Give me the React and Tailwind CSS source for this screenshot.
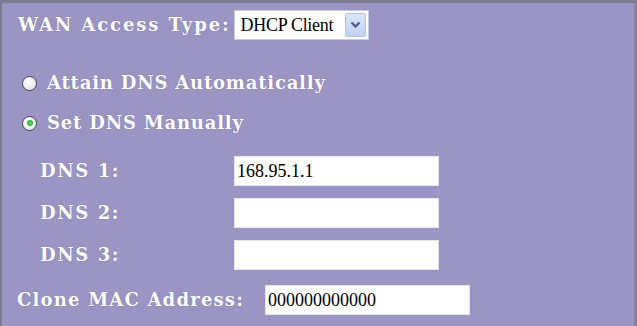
import React from "react";

const label = "text-white font-bold text-[18px] leading-none [font-family:'DejaVu_Serif',serif] [text-shadow:0_0_1px_rgba(80,70,120,0.6)]";
const inputText = "[font-family:'Liberation_Serif',serif] text-[18px] text-black leading-none";

function Radio({ checked }) {
  return (
    <span className="relative inline-flex w-[15px] h-[15px] rounded-full border border-[#3c4a5e] bg-[radial-gradient(circle_at_40%_35%,#ffffff,#dcdce4)] items-center justify-center shrink-0">
      {checked && <span className="w-[6px] h-[6px] rounded-full bg-[radial-gradient(circle,#5ed85a,#1e9a2a)]" />}
    </span>
  );
}

function TextBox({ value, className = "" }) {
  return (
    <div className={`h-[30px] w-[205px] bg-white border border-[#e4e4f0] flex items-center pl-[2px] ${className}`}>
      <span className={inputText}>{value}</span>
    </div>
  );
}

export default function App() {
  return (
    <div className="w-[637px] h-[326px] bg-[#9b95c4] border-t-[3px] border-t-[#7d7b92] border-l-[2px] border-l-[#7d7b92] border-r-[3px] border-r-[#85839a] box-border flex flex-col">
      <div className="flex items-center pl-[16px] pt-[7px]">
        <span className={`${label} tracking-[1.9px]`}>WAN Access Type:</span>
        <div className="ml-[3px] w-[135px] h-[30px] bg-white border border-[#c8cce0] flex items-center justify-between pl-[6px] pr-[2px]">
          <span className={`${inputText} tracking-[-0.3px]`}>DHCP Client</span>
          <span className="w-[21px] h-[24px] bg-[linear-gradient(#dbe6f8,#c0d2f0)] border border-[#b3c4e3] rounded-[2px] flex items-center justify-center">
            <svg width="11" height="8" viewBox="0 0 11 8">
              <path d="M1.5 1.5 L5.5 5.5 L9.5 1.5" fill="none" stroke="#4d5f86" strokeWidth="2.4" />
            </svg>
          </span>
        </div>
      </div>
      <div className="flex items-center pl-[20px] mt-[34px] gap-[10px]">
        <Radio />
        <span className={`${label} tracking-[0.8px]`}>Attain DNS Automatically</span>
      </div>
      <div className="flex items-center pl-[20px] mt-[22px] gap-[10px]">
        <Radio checked />
        <span className={`${label} tracking-[0.8px]`}>Set DNS Manually</span>
      </div>
      <div className="flex flex-col mt-[24px] gap-[12px]">
        {[["DNS 1:", "168.95.1.1"], ["DNS 2:", ""], ["DNS 3:", ""]].map(([l, v]) => (
          <div key={l} className="flex items-center">
            <span className={`${label} tracking-[1.6px] w-[232px] pl-[38px]`}>{l}</span>
            <TextBox value={v} />
          </div>
        ))}
      </div>
      <div className="flex items-center mt-[15px] pl-[15px]">
        <span className={`${label} tracking-[1.2px] w-[248px]`}>Clone MAC Address:</span>
        <TextBox value="000000000000" className="h-[29px]" />
      </div>
    </div>
  );
}
